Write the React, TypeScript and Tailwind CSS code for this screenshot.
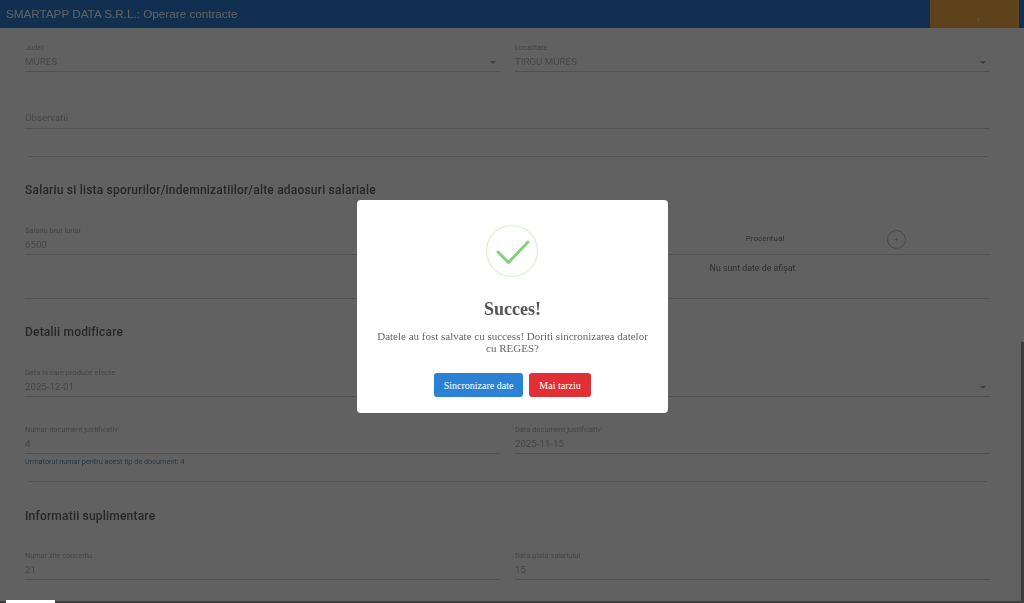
import { Plus } from "lucide-react";

const roboto = "font-['Roboto',sans-serif]";

function Field({ label, value, arrow }: { label?: string; value?: string; arrow?: boolean }) {
  return (
    <div className="border-b border-[#d6d6d6] h-[30px]">
      <div className="h-[13px] text-[7.4px] leading-[12px] text-[#b4b4b4]">{label}</div>
      <div className="flex items-center justify-between h-[14px] text-[9.7px] leading-[14px] text-[#b8b8b8]">
        <span>{value}</span>
        {arrow && <span className="mr-[4px] w-0 h-0 border-x-[3px] border-x-transparent border-t-[3px] border-t-[#a8a8a8]" />}
      </div>
    </div>
  );
}

function Heading({ children, className }: { children: string; className: string }) {
  return <h2 className={`h-[20px] text-[12px] leading-[20px] font-medium tracking-[0.2px] text-[#666] ${className}`}>{children}</h2>;
}

export default function App() {
  return (
    <div className={`relative flex flex-col w-[1024px] h-[603px] overflow-hidden bg-white ${roboto}`}>
      <header className="flex items-start justify-between h-[28px] pl-[6px] pr-[5px] bg-[#2a7cd4] shrink-0">
        <span className="font-['Liberation_Sans',sans-serif] text-[11.7px] leading-[27px] text-white blur-[0.4px]">
          SMARTAPP DATA S.R.L.: Operare contracte
        </span>
        <div className="flex items-end justify-center w-[89px] h-[28px] bg-[#f8ae48] text-[8px] leading-[16px] text-white pl-[8px]">‹</div>
      </header>

      <div className="flex flex-1 min-h-0">
        <main className="flex-1 pl-[25px] pr-[31px] pt-[14px] blur-[0.4px]">
          <div className="grid grid-cols-2 gap-x-[15px]">
            <Field label="Judet" value="MURES" arrow />
            <Field label="Localitate" value="TIRGU MURES" arrow />
          </div>

          <div className="mt-[40px] h-[17px] border-b border-[#d6d6d6] text-[9.6px] leading-[12px] text-[#b8b8b8]">Observatii</div>
          <div className="mt-[27px] ml-[3px] mr-[2px] border-b border-[#dadada]" />

          <Heading className="mt-[23px]">Salariu si lista sporurilor/indemnizatiilor/alte adaosuri salariale</Heading>

          <div className="grid grid-cols-2 gap-x-[15px] mt-[25px]">
            <Field label="Salariu brut lunar" value="6500" />
            <div>
              <div className="flex items-center h-[30px] border-b border-[#dadada] text-[8px] text-[#7c7c7c]">
                <div className="w-[200px] -mt-[2px]" />
                <div className="w-[100px] -mt-[2px] text-center">Procentual</div>
                <div className="flex justify-center w-[162px]">
                  <span className="flex items-center justify-center w-[19px] h-[19px] rounded-full border border-[#b8b8b8] text-[#a8a8a8]">
                    <Plus size={7} strokeWidth={1.5} />
                  </span>
                </div>
              </div>
              <div className="h-[26px] text-center text-[8.8px] leading-[26px] text-[#7a7a7a]">Nu sunt date de afișat</div>
            </div>
          </div>
          <div className="mt-[17px] border-b border-[#dadada]" />

          <Heading className="mt-[23px]">Detalii modificare</Heading>

          <div className="grid grid-cols-2 gap-x-[15px] mt-[25px]">
            <Field label="Data la care produce efecte" value="2025-12-01" />
            <Field arrow value=" " />
          </div>

          <div className="grid grid-cols-2 gap-x-[15px] mt-[27px]">
            <div>
              <Field label="Numar document justificativ" value="4" />
              <div className="mt-[2px] text-[7.3px] leading-[12px] text-[#5f93b8]">Urmatorul numar pentru acest tip de document: 4</div>
            </div>
            <Field label="Data document justificativ" value="2025-11-15" />
          </div>
          <div className="mt-[13px] ml-[3px] mr-[3px] border-b border-[#dadada]" />

          <Heading className="mt-[24px]">Informatii suplimentare</Heading>

          <div className="grid grid-cols-2 gap-x-[15px] mt-[24px]">
            <Field label="Numar zile concediu" value="21" />
            <Field label="Data plata salariului" value="15" />
          </div>
        </main>
        <div className="w-[3px] pt-[314px]">
          <div className="h-full bg-[#a0a0a0]" />
        </div>
      </div>

      <div className="h-[2px] bg-[#a6a6a6] shrink-0" />

      {/* modal backdrop */}
      <div className="absolute inset-0 flex justify-center pt-[200px] bg-black/[0.62]">
        <div className="flex flex-col items-center w-[311px] h-[213px] pt-[24px] rounded-[4px] bg-white font-['Liberation_Serif',serif] ml-[1px]">
          <svg width="54" height="54" viewBox="0 0 54 54" fill="none" className="-ml-[1px]">
            <circle cx="27" cy="27" r="25.5" stroke="#e2f2dc" strokeWidth="1.6" />
            <path d="M13 28 L23.5 38.5 L43 18" stroke="#84d07c" strokeWidth="3" strokeLinecap="round" strokeLinejoin="round" />
          </svg>
          <h1 className="mt-[19px] text-[18px] leading-[24px] font-bold text-[#555] blur-[0.2px]">Succes!</h1>
          <p className="mt-[9px] w-[275px] text-center text-[11px] leading-[12px] text-[#666] blur-[0.2px]">
            Datele au fost salvate cu success! Doriti sincronizarea datelor cu REGES?
          </p>
          <div className="flex gap-[6px] mt-[19px]">
            <button className="w-[89px] h-[24px] rounded-[3px] bg-[#2b82d4] text-[10px] text-white">Sincronizare date</button>
            <button className="w-[62px] h-[24px] rounded-[3px] bg-[#e03036] text-[10px] text-white">Mai tarziu</button>
          </div>
        </div>
      </div>

      {/* white tab at the very bottom, sits above the backdrop */}
      <div className="absolute left-[6px] bottom-0 w-[49px] h-[3px] bg-white" />
    </div>
  );
}
